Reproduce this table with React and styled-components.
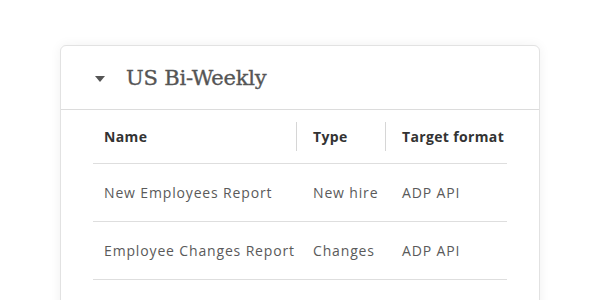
import React from "react";
import styled, { createGlobalStyle } from "styled-components";

const Global = createGlobalStyle`
  html, body { margin: 0; padding: 0; background: #fff; }
  body { font-family: "Open Sans", "Liberation Sans", sans-serif; }
`;

const Page = styled.div`
  width: 600px;
  height: 300px;
  overflow: hidden;
  padding: 45px 60px 0 60px;
  box-sizing: border-box;
`;

const Card = styled.section`
  width: 480px;
  height: 300px;
  box-sizing: border-box;
  background: #fff;
  border: 1px solid #e2e2e2;
  border-radius: 6px;
  box-shadow: 0 0 12px rgba(0, 0, 0, 0.06);
`;

const Header = styled.header`
  display: flex;
  align-items: center;
  height: 63px;
  padding-left: 34px;
  border-bottom: 1px solid #dcdcdc;
`;

const Caret = styled.svg`
  width: 10px;
  height: 6px;
  margin-right: 21px;
  margin-top: 2px;
`;

const Title = styled.h2`
  margin: 0;
  font-family: "DejaVu Serif", "Liberation Serif", serif;
  font-weight: 400;
  font-size: 21px;
  color: #555;
  letter-spacing: -0.2px;
  -webkit-text-stroke: 0.35px #555;
`;

const Table = styled.div`
  margin: 0 32px 0 32px;
`;

const Row = styled.div`
  display: grid;
  grid-template-columns: 203px 89px 121px;
  align-items: center;
  height: ${(p) => (p.$head ? "53px" : "57px")};
  border-bottom: 1px solid #dedede;
`;

const Cell = styled.div`
  position: relative;
  padding-left: ${(p) => (p.$first ? "11px" : "17px")};
  white-space: nowrap;
  font-size: 14px;
  font-weight: ${(p) => (p.$head ? 700 : 400)};
  color: ${(p) => (p.$head ? "#333" : "#5a5a5a")};
  letter-spacing: ${(p) => (p.$head ? "0.35px" : "0.85px")};
  ${(p) =>
    p.$divider &&
    `
    &::before {
      content: "";
      position: absolute;
      left: 0;
      top: -5px;
      bottom: -5px;
      width: 1px;
      background: #d6d6d6;
    }
  `}
`;

const rows = [
  ["New Employees Report", "New hire", "ADP API"],
  ["Employee Changes Report", "Changes", "ADP API"],
];

export default function App() {
  return (
    <>
      <Global />
      <Page>
        <Card>
          <Header>
            <Caret viewBox="0 0 10 6">
              <path d="M0 0 H10 L5 6 Z" fill="#555" />
            </Caret>
            <Title>US Bi-Weekly</Title>
          </Header>
          <Table>
            <Row $head>
              <Cell $head $first>Name</Cell>
              <Cell $head $divider>Type</Cell>
              <Cell $head $divider>Target format</Cell>
            </Row>
            {rows.map((r) => (
              <Row key={r[0]}>
                <Cell $first>{r[0]}</Cell>
                <Cell>{r[1]}</Cell>
                <Cell>{r[2]}</Cell>
              </Row>
            ))}
          </Table>
        </Card>
      </Page>
    </>
  );
}
